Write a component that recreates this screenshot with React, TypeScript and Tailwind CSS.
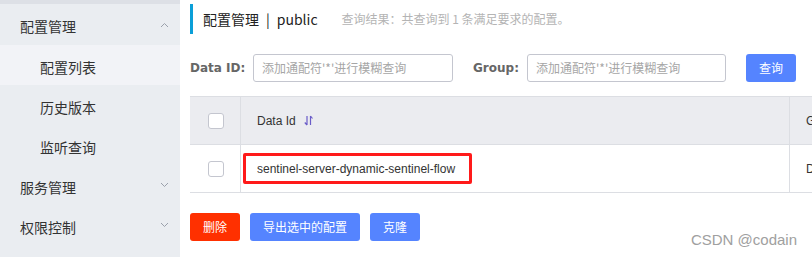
import React from "react";

const font = { fontFamily: '"Noto Sans CJK SC", "Noto Sans", sans-serif' };
const latin = { fontFamily: '"Liberation Sans", "Noto Sans CJK SC", sans-serif' };

function Chevron({ up }: { up?: boolean }) {
  return (
    <svg width="9" height="6" viewBox="0 0 9 6" className="text-[#9aa0ab]">
      {up ? (
        <path d="M1 5 L4.5 1.5 L8 5" fill="none" stroke="currentColor" strokeWidth="1" />
      ) : (
        <path d="M1 1 L4.5 4.5 L8 1" fill="none" stroke="currentColor" strokeWidth="1" />
      )}
    </svg>
  );
}

function SortIcon() {
  return (
    <svg width="9" height="11" viewBox="0 0 9 11" className="text-[#6a5cc8]">
      <path d="M3 1 V10 M3 10 L0.8 7.5" fill="none" stroke="currentColor" strokeWidth="1.2" />
      <path d="M6.5 10 V1 M6.5 1 L8.5 3.5" fill="none" stroke="currentColor" strokeWidth="1.2" />
    </svg>
  );
}

function Checkbox() {
  return <div className="w-4 h-4 rounded-[3px] border border-[#c4c6cf] bg-white" />;
}

export default function App() {
  return (
    <div className="w-[812px] h-[257px] overflow-hidden bg-white flex text-[#333]" style={font}>
      <aside className="w-[180px] shrink-0 bg-[#eaedf1] flex flex-col">
        <div className="h-[4px] bg-[#dde0e6]" />
        <div className="h-[41px] flex items-center justify-between pl-5 pr-[11px] text-[14px] text-[#333]">
          <span className="pt-[4px]">配置管理</span>
          <Chevron up />
        </div>
        <div className="h-[40px] flex items-center pl-10 text-[14px] bg-[#f2f3f7]"><span className="pt-[4px]">配置列表</span></div>
        <div className="h-[40px] flex items-center pl-10 text-[14px]"><span className="pt-[4px]">历史版本</span></div>
        <div className="h-[40px] flex items-center pl-10 text-[14px]"><span className="pt-[4px]">监听查询</span></div>
        <div className="h-[40px] flex items-center justify-between pl-5 pr-[11px] text-[14px]">
          <span className="pt-[4px]">服务管理</span>
          <Chevron />
        </div>
        <div className="h-[40px] flex items-center justify-between pl-5 pr-[11px] text-[14px]">
          <span className="pt-[4px]">权限控制</span>
          <Chevron />
        </div>
      </aside>
      <main className="flex-1 min-w-0 overflow-hidden pl-[10px] relative">
        <div className="mt-[4px] h-[30px] flex items-center border-l-[3px] border-[#0b9fd8] pl-[10px] whitespace-nowrap">
          <span className="text-[14px] text-[#222]">配置管理</span>
          <span className="text-[14px] text-[#222] mx-[7px]">|</span>
          <span className="text-[14px] text-[#222]">public</span>
          <span className="ml-[24px] text-[12px] text-[#b4b4b4]">查询结果：共查询到 1 条满足要求的配置。</span>
        </div>
        <div className="mt-[20px] flex items-center h-[28px] whitespace-nowrap">
          <span className="font-bold text-[#666] w-[63px] shrink-0" style={{ fontFamily: '"DejaVu Sans", sans-serif', fontSize: 12 }}>Data ID:</span>
          <div className="w-[200px] shrink-0 h-[28px] border border-[#c4c6cf] rounded-[3px] flex items-center pl-[8px] text-[12px] text-[#a6a6a6]">添加通配符'*'进行模糊查询</div>
          <span className="ml-[20px] w-[54px] shrink-0 font-bold text-[#666]" style={{ fontFamily: '"DejaVu Sans", sans-serif', fontSize: 12 }}>Group:</span>
          <div className="w-[199px] shrink-0 h-[28px] border border-[#c4c6cf] rounded-[3px] flex items-center pl-[8px] text-[12px] text-[#a6a6a6]">添加通配符'*'进行模糊查询</div>
          <button className="ml-[20px] shrink-0 w-[50px] h-[28px] rounded-[3px] bg-[#5584ff] text-white text-[12px]">查询</button>
        </div>
        <div className="mt-[14px] w-[700px] border-t border-[#dcdee3]">
          <div className="flex h-[48px] bg-[#ebecf0] border-b border-[#dcdee3]">
            <div className="w-[51px] shrink-0 border-r border-[#dcdee3] flex items-center justify-center pl-[1px]">
              <Checkbox />
            </div>
            <div className="w-[549px] shrink-0 border-r border-[#dcdee3] flex items-center pl-[16px] text-[12px] text-[#333]" style={latin}>
              <span>Data Id</span>
              <span className="ml-[8px] flex items-center"><SortIcon /></span>
            </div>
            <div className="flex-1 flex items-center pl-[16px] text-[12px] whitespace-nowrap" style={latin}>Group</div>
          </div>
          <div className="flex h-[48px] border-b border-[#dcdee3]">
            <div className="w-[51px] shrink-0 border-r border-[#dcdee3] flex items-center justify-center pl-[1px]">
              <Checkbox />
            </div>
            <div className="w-[549px] shrink-0 border-r border-[#dcdee3] flex items-center pl-[2px]">
              <div className="w-[229px] h-[31px] border-[3px] border-[#ff1a1a] rounded-[2px] flex items-center pl-[11px] text-[12px] text-[#333] whitespace-nowrap" style={latin}>
                sentinel-server-dynamic-sentinel-flow
              </div>
            </div>
            <div className="flex-1 flex items-center pl-[16px] text-[12px] whitespace-nowrap" style={latin}>DEFAULT_GROUP</div>
          </div>
        </div>
        <div className="mt-[20px] flex gap-[10px]">
          <button className="w-[50px] h-[28px] rounded-[3px] bg-[#ff3000] text-white text-[12px]">删除</button>
          <button className="w-[110px] h-[28px] rounded-[3px] bg-[#5584ff] text-white text-[12px]">导出选中的配置</button>
          <button className="w-[50px] h-[28px] rounded-[3px] bg-[#5584ff] text-white text-[12px]">克隆</button>
        </div>
        <div className="absolute right-[15px] bottom-[6px] text-[15px] text-[#a0a0a0] whitespace-nowrap" style={{ fontFamily: '"Liberation Sans", sans-serif' }}>CSDN @codain</div>
      </main>
    </div>
  );
}
